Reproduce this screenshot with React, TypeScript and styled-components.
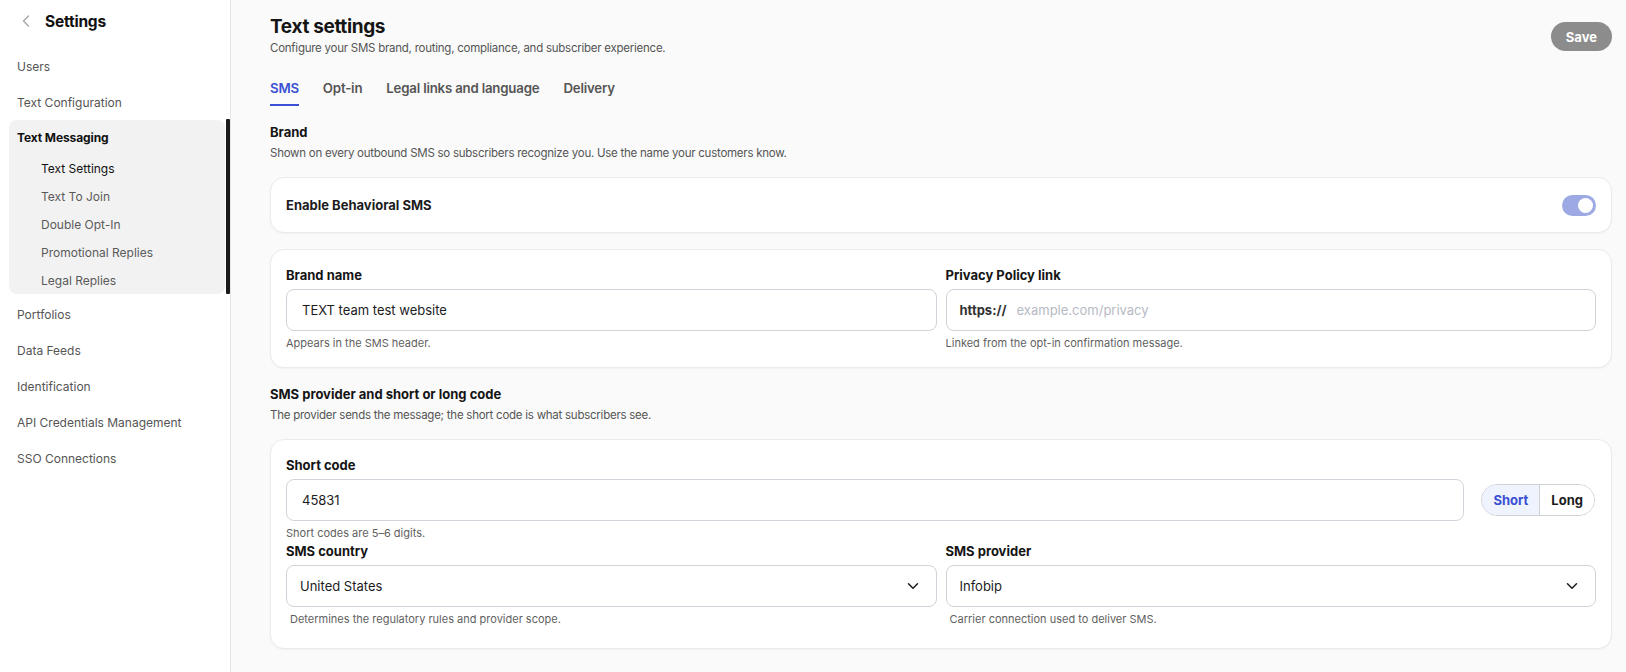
import React from 'react';
import styled, { createGlobalStyle } from 'styled-components';
import { ChevronLeft, ChevronDown } from 'lucide-react';

const GlobalStyle = createGlobalStyle`
  html, body {
    margin: 0;
    padding: 0;
    background: #fafafa;
  }

  body {
    font-family: Inter, 'Noto Sans', sans-serif;
    color: #1c1c1e;
    -webkit-font-smoothing: antialiased;
  }

  * {
    box-sizing: border-box;
  }
`;

const Layout = styled.div`
  display: flex;
  min-height: 100vh;
`;

const Sidebar = styled.aside`
  width: 231px;
  flex-shrink: 0;
  background: #ffffff;
  border-right: 1px solid #e6e6e6;
  padding-left: 9px;
`;

const SidebarHeader = styled.div`
  height: 42px;
  display: flex;
  align-items: center;
  gap: 9px;
  padding-left: 7px;
  color: #a3a3a3;

  & h1 {
    margin: 0;
    font-size: 15.5px;
    font-weight: 700;
    color: #111;
    letter-spacing: -0.2px;
  }
`;

const Nav = styled.nav`
  margin-top: 6px;
  display: flex;
  flex-direction: column;
`;

const NavItem = styled.div<{ $first?: boolean }>`
  height: 36px;
  display: flex;
  align-items: center;
  padding-left: 8px;
  margin-top: ${(p) => (p.$first ? '2px' : '0')};
  font-size: 12px;
  color: #555;
`;

const GroupRow = styled.div`
  display: flex;
  gap: 1px;
`;

const Group = styled.div`
  flex: 1;
  background: #f2f2f2;
  border-radius: 8px;
`;

const ActiveBar = styled.div`
  width: 4px;
  margin-top: -1px;
  background: #1b1b1b;
  border-radius: 1px;
`;

const GroupTitle = styled.div`
  height: 34px;
  display: flex;
  align-items: center;
  padding-left: 8px;
  font-size: 12px;
  font-weight: 700;
  letter-spacing: -0.1px;
  color: #111;
`;

const SubItem = styled.div<{ $active?: boolean }>`
  height: 28px;
  display: flex;
  align-items: center;
  padding-left: 32px;
  font-size: 12px;
  color: ${(p) => (p.$active ? '#111' : '#5a5a5a')};
`;

const Main = styled.main`
  flex: 1;
  min-width: 0;
  padding: 14px 14px 24px 39px;
`;

const PageHeader = styled.header`
  display: flex;
  justify-content: space-between;
  align-items: flex-start;
`;

const Title = styled.h2`
  margin: 0;
  font-size: 19px;
  line-height: 26px;
  font-weight: 700;
  color: #151515;
  letter-spacing: -0.35px;
`;

const Subtitle = styled.p`
  margin: 0;
  font-size: 11.5px;
  line-height: 16px;
  letter-spacing: -0.25px;
  color: #555;
`;

const SaveButton = styled.button`
  margin-top: 8px;
  height: 29px;
  padding: 0 15px;
  border: none;
  border-radius: 999px;
  background: #8c8c8c;
  color: #fff;
  font-family: inherit;
  font-size: 13px;
  font-weight: 700;
`;

const Tabs = styled.div`
  margin-top: 22px;
  display: flex;
  gap: 24px;
`;

const Tab = styled.div<{ $active?: boolean }>`
  font-size: 13.25px;
  line-height: 20px;
  font-weight: 600;
  letter-spacing: -0.2px;
  padding-bottom: 6px;
  color: ${(p) => (p.$active ? '#3a4fd3' : '#555')};
  border-bottom: 2px solid ${(p) => (p.$active ? '#3a4fd3' : 'transparent')};
`;

const Section = styled.section`
  margin-top: 16px;
`;

const SectionTitle = styled.h3`
  margin: 0;
  font-size: 13px;
  line-height: 20px;
  font-weight: 700;
  color: #151515;
`;

const SectionText = styled.p`
  margin: 3px 0 16px;
  font-size: 11.5px;
  line-height: 16px;
  letter-spacing: -0.25px;
  color: #555;
`;

const Card = styled.div<{ $pb?: number }>`
  background: #fff;
  border: 1px solid #ebebeb;
  border-radius: 14px;
  box-shadow: 0 1px 2px rgba(0, 0, 0, 0.04);
  padding: 15px 15px ${(p) => p.$pb ?? 16}px;
  margin-bottom: 16px;
`;

const ToggleCard = styled(Card)`
  display: flex;
  align-items: center;
  justify-content: space-between;
  margin-top: 1px;
  padding: 15px;
  font-size: 13px;
  font-weight: 700;
  line-height: 24px;
`;

const Toggle = styled.div<{ $on?: boolean }>`
  width: 34px;
  height: 21px;
  border-radius: 999px;
  background: ${(p) => (p.$on ? '#9ca9e2' : '#d4d4d4')};
  display: flex;
  align-items: center;
  justify-content: ${(p) => (p.$on ? 'flex-end' : 'flex-start')};
  padding: 0 3px;

  &::after {
    content: '';
    width: 15px;
    height: 15px;
    border-radius: 50%;
    background: #fff;
  }
`;

const TwoCol = styled.div`
  display: grid;
  grid-template-columns: 1fr 1fr;
  column-gap: 9px;
`;

const Field = styled.div`
  display: flex;
  flex-direction: column;
  min-width: 0;
`;

const Label = styled.label`
  font-size: 13px;
  line-height: 20px;
  font-weight: 700;
  color: #151515;
  margin-bottom: 4px;
`;

const Input = styled.input`
  height: 42px;
  width: 100%;
  border: 1px solid #d2d3da;
  border-radius: 8px;
  padding: 0 15px;
  font-family: inherit;
  font-size: 13px;
  color: #1c1c1e;
  background: #fff;
  outline: none;
`;

const PrefixBox = styled.div`
  height: 42px;
  display: flex;
  align-items: center;
  gap: 10px;
  border: 1px solid #d2d3da;
  border-radius: 8px;
  padding: 0 13px;
  background: #fff;

  & span {
    font-size: 13px;
    font-weight: 700;
    color: #333;
  }

  & input {
    flex: 1;
    border: none;
    outline: none;
    font-family: inherit;
    font-size: 13px;
    padding: 0;
  }

  & input::placeholder {
    color: #b6bac4;
  }
`;

const SelectBox = styled.div`
  height: 42px;
  display: flex;
  align-items: center;
  justify-content: space-between;
  border: 1px solid #d2d3da;
  border-radius: 8px;
  padding: 0 14px 0 13px;
  background: #fff;
  font-size: 13px;
  color: #1c1c1e;
`;

const Help = styled.div<{ $indent?: boolean }>`
  margin-top: 4px;
  padding-left: ${(p) => (p.$indent ? '4px' : '0')};
  font-size: 11px;
  line-height: 16px;
  color: #5f5f5f;
`;

const CodeRow = styled.div`
  display: flex;
  align-items: center;
  gap: 17px;
`;

const Segmented = styled.div`
  display: flex;
  height: 32px;
  border: 1px solid #cfd2d8;
  border-radius: 999px;
  overflow: hidden;
  flex-shrink: 0;
  margin-right: 1px;
`;

const Segment = styled.div<{ $active?: boolean }>`
  display: flex;
  align-items: center;
  padding: 0 11px;
  font-size: 13px;
  font-weight: 700;
  color: ${(p) => (p.$active ? '#3a4fd3' : '#1c1c1e')};
  background: ${(p) => (p.$active ? '#eef3fd' : '#fff')};

  & + & {
    border-left: 1px solid #cfd2d8;
  }
`;

const topNav = ['Users', 'Text Configuration'];
const subNav = ['Text Settings', 'Text To Join', 'Double Opt-In', 'Promotional Replies', 'Legal Replies'];
const bottomNav = ['Portfolios', 'Data Feeds', 'Identification', 'API Credentials Management', 'SSO Connections'];
const tabs = ['SMS', 'Opt-in', 'Legal links and language', 'Delivery'];

const App: React.FC = () => (
  <>
    <GlobalStyle />
    <Layout>
      <Sidebar>
        <SidebarHeader>
          <ChevronLeft size={20} strokeWidth={1.5} />
          <h1>Settings</h1>
        </SidebarHeader>
        <Nav>
          {topNav.map((item) => (
            <NavItem key={item}>{item}</NavItem>
          ))}
          <GroupRow>
            <Group>
              <GroupTitle>Text Messaging</GroupTitle>
              {subNav.map((item, i) => (
                <SubItem key={item} $active={i === 0}>
                  {item}
                </SubItem>
              ))}
            </Group>
            <ActiveBar />
          </GroupRow>
          {bottomNav.map((item, i) => (
            <NavItem key={item} $first={i === 0}>
              {item}
            </NavItem>
          ))}
        </Nav>
      </Sidebar>

      <Main>
        <PageHeader>
          <div>
            <Title>Text settings</Title>
            <Subtitle>Configure your SMS brand, routing, compliance, and subscriber experience.</Subtitle>
          </div>
          <SaveButton>Save</SaveButton>
        </PageHeader>

        <Tabs>
          {tabs.map((t, i) => (
            <Tab key={t} $active={i === 0}>
              {t}
            </Tab>
          ))}
        </Tabs>

        <Section>
          <SectionTitle>Brand</SectionTitle>
          <SectionText>
            Shown on every outbound SMS so subscribers recognize you. Use the name your customers know.
          </SectionText>

          <ToggleCard>
            <span>Enable Behavioral SMS</span>
            <Toggle $on />
          </ToggleCard>

          <Card $pb={16}>
            <TwoCol>
              <Field>
                <Label>Brand name</Label>
                <Input defaultValue="TEXT team test website" />
                <Help>Appears in the SMS header.</Help>
              </Field>
              <Field>
                <Label>Privacy Policy link</Label>
                <PrefixBox>
                  <span>https://</span>
                  <input placeholder="example.com/privacy" />
                </PrefixBox>
                <Help>Linked from the opt-in confirmation message.</Help>
              </Field>
            </TwoCol>
          </Card>
        </Section>

        <Section>
          <SectionTitle>SMS provider and short or long code</SectionTitle>
          <SectionText>The provider sends the message; the short code is what subscribers see.</SectionText>

          <Card $pb={21}>
            <Field>
              <Label>Short code</Label>
              <CodeRow>
                <Input defaultValue="45831" />
                <Segmented>
                  <Segment $active>Short</Segment>
                  <Segment>Long</Segment>
                </Segmented>
              </CodeRow>
              <Help>Short codes are 5–6 digits.</Help>
            </Field>
            <TwoCol>
              <Field>
                <Label>SMS country</Label>
                <SelectBox>
                  United States
                  <ChevronDown size={18} strokeWidth={2} />
                </SelectBox>
                <Help $indent>Determines the regulatory rules and provider scope.</Help>
              </Field>
              <Field>
                <Label>SMS provider</Label>
                <SelectBox>
                  Infobip
                  <ChevronDown size={18} strokeWidth={2} />
                </SelectBox>
                <Help $indent>Carrier connection used to deliver SMS.</Help>
              </Field>
            </TwoCol>
          </Card>
        </Section>
      </Main>
    </Layout>
  </>
);

export default App;
